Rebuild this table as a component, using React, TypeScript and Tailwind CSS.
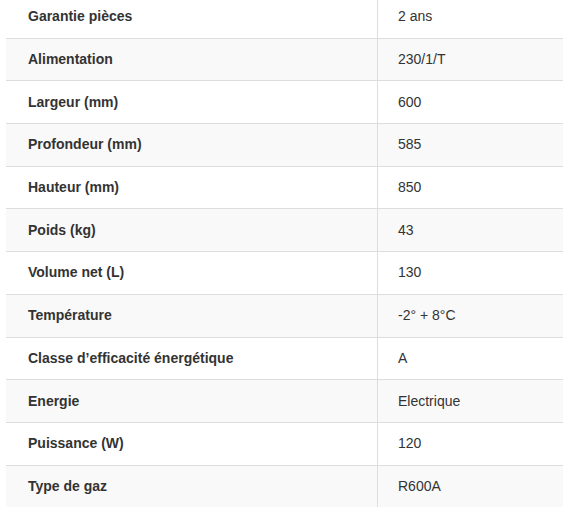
const specs = [
  ['Garantie pièces', '2 ans'],
  ['Alimentation', '230/1/T'],
  ['Largeur (mm)', '600'],
  ['Profondeur (mm)', '585'],
  ['Hauteur (mm)', '850'],
  ['Poids (kg)', '43'],
  ['Volume net (L)', '130'],
  ['Température', '-2° + 8°C'],
  ['Classe d’efficacité énergétique', 'A'],
  ['Energie', 'Electrique'],
  ['Puissance (W)', '120'],
  ['Type de gaz', 'R600A'],
]

export default function App() {
  return (
    <div className="h-[507px] w-[563px] overflow-hidden bg-white pl-[6px] font-['Liberation_Sans',Arial,sans-serif] text-[14px] text-[#333]">
      <div className="-mt-[4px] flex flex-col">
        {specs.map(([label, value], i) => (
          <div
            key={label}
            className={
              'flex h-[42.7px] shrink-0 items-center border-b border-[#dddddd] ' +
              (i % 2 === 1 ? 'bg-[#f9f9f9]' : 'bg-white')
            }
          >
            <div className="flex h-full w-[372px] items-center border-r border-[#dddddd] pl-[22px] font-bold">
              {label}
            </div>
            <div className="flex h-full flex-1 items-center pl-[20px]">{value}</div>
          </div>
        ))}
      </div>
    </div>
  )
}
